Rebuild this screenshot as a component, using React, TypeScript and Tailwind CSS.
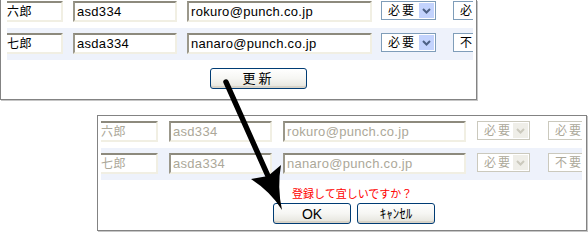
import React from "react"

type Row = { name: string; id: string; email: string; need: string; last: string }

const rows: Row[] = [
  { name: "六郎", id: "asd334", email: "rokuro@punch.co.jp", need: "必要", last: "必要" },
  { name: "七郎", id: "asda334", email: "nanaro@punch.co.jp", need: "必要", last: "不要" },
]

type Cols = { name: string; id: string; email: string; sel: string; last: string }

const topCols: Cols = {
  name: "w-[59px] -ml-[3px]",
  id: "w-[104px] ml-[10px]",
  email: "w-[185px] ml-[10px]",
  sel: "w-[55px] ml-[9px]",
  last: "w-[60px] ml-[17px]",
}

const bottomCols: Cols = {
  name: "w-[60px] -ml-[3px]",
  id: "w-[103px] ml-[11px]",
  email: "w-[183px] ml-[11px]",
  sel: "w-[53px] ml-[11px]",
  last: "w-[60px] ml-[18px]",
}

function Field({ text, cls, dim, cjk }: { text: string; cls: string; dim?: boolean; cjk?: boolean }) {
  return (
    <div
      className={`h-[21px] shrink-0 flex items-center overflow-hidden whitespace-nowrap leading-none bg-white border-2 border-t-[#8d8a7d] border-l-[#9b988b] border-b-[#f1efe3] border-r-[#f1efe3] ${
        cjk ? "text-[12px] pl-[1px] tracking-[0.5px]" : "text-[13px] pl-[2px] tracking-[0.3px]"
      } ${dim ? "text-[#aca899]" : "text-black"} ${cls}`}
    >
      {text}
    </div>
  )
}

function Combo({ text, cls, dim, arrow }: { text: string; cls: string; dim?: boolean; arrow?: boolean }) {
  return (
    <div
      className={`relative h-[19px] shrink-0 flex items-center pl-[6px] bg-white border text-[12px] leading-none tracking-[2px] whitespace-nowrap overflow-hidden ${
        dim ? "border-[#cbc9bd] text-[#aca899]" : "border-[#7f9db9] text-black"
      } ${cls}`}
    >
      {text}
      {arrow && (
        <div
          className={`absolute right-[1px] top-[1px] w-[15px] h-[15px] flex items-center justify-center ${
            dim ? "bg-[#efeee8]" : "bg-[#c3d3fd]"
          }`}
        >
          <svg width="9" height="6" viewBox="0 0 9 6">
            <path d="M1 1 L4.5 4.5 L8 1" fill="none" stroke={dim ? "#cbc9bd" : "#4d6185"} strokeWidth="2" />
          </svg>
        </div>
      )}
    </div>
  )
}

function XpButton({ label, cls }: { label: string; cls: string }) {
  return (
    <div
      className={`h-[21px] flex items-center justify-center rounded-[3px] border border-[#003c74] bg-linear-to-b from-white via-[#f6f6f3] to-[#e4e3db] text-[13px] leading-none text-black shadow-[inset_0_-2px_0_#d8d3c8] ${cls}`}
    >
      {label}
    </div>
  )
}

function Rows({ cols, dim }: { cols: Cols; dim?: boolean }) {
  return (
    <>
      {rows.map((r, i) => (
        <div key={r.id} className={`h-[32px] flex items-start pt-[5px] ${i % 2 ? "bg-[#eef2fb]" : "bg-white"}`}>
          <Field text={r.name} cls={cols.name} dim={dim} cjk />
          <Field text={r.id} cls={cols.id} dim={dim} />
          <Field text={r.email} cls={cols.email} dim={dim} />
          <Combo text={r.need} cls={cols.sel} dim={dim} arrow />
          <Combo text={r.last} cls={cols.last} dim={dim} />
        </div>
      ))}
    </>
  )
}

export default function App() {
  return (
    <div className="relative w-[588px] h-[240px] bg-white overflow-hidden font-['Liberation_Sans','Noto_Sans_CJK_JP',sans-serif]">
      {/* before: editable form */}
      <div className="w-[477px] h-[100px] border-x border-b border-[#838383] pl-[6px] shadow-[1px_1px_0_#c6c6c6]">
        <div className="w-[466px] h-[60px] overflow-hidden">
          <div className="-mt-[4px]">
            <Rows cols={topCols} />
          </div>
        </div>
        <XpButton label="更新" cls="mt-[8px] ml-[203px] w-[97px] tracking-[3px]" />
      </div>

      {/* after: confirmation */}
      <div className="ml-[97px] mt-[15px] w-[490px] h-[116px] border border-[#838383] pl-[3px] shadow-[1px_1px_0_#c6c6c6]">
        <div className="w-[481px] h-[64px] overflow-hidden">
          <Rows cols={bottomCols} dim />
        </div>
        <div className="mt-[5px] ml-[191px] text-[11px] leading-[16px] text-[#ff0000] font-['Noto_Sans_CJK_JP',sans-serif]">
          登録して宜しいですか？
        </div>
        <div className="mt-[2px] ml-[172px] flex gap-[6px]">
          <XpButton label="OK" cls="w-[78px] text-[14px]" />
          <XpButton label="ｷｬﾝｾﾙ" cls="w-[78px] text-[12px]" />
        </div>
      </div>

      <svg className="absolute inset-0 pointer-events-none" width="588" height="240" viewBox="0 0 588 240">
        <line x1="226" y1="82" x2="268" y2="176" stroke="#000" strokeWidth="5.5" strokeLinecap="round" />
        <path d="M282 210 Q271 192 251 179 L268 176 L281 165 Q277 187 282 210 Z" fill="#000" />
      </svg>
    </div>
  )
}
